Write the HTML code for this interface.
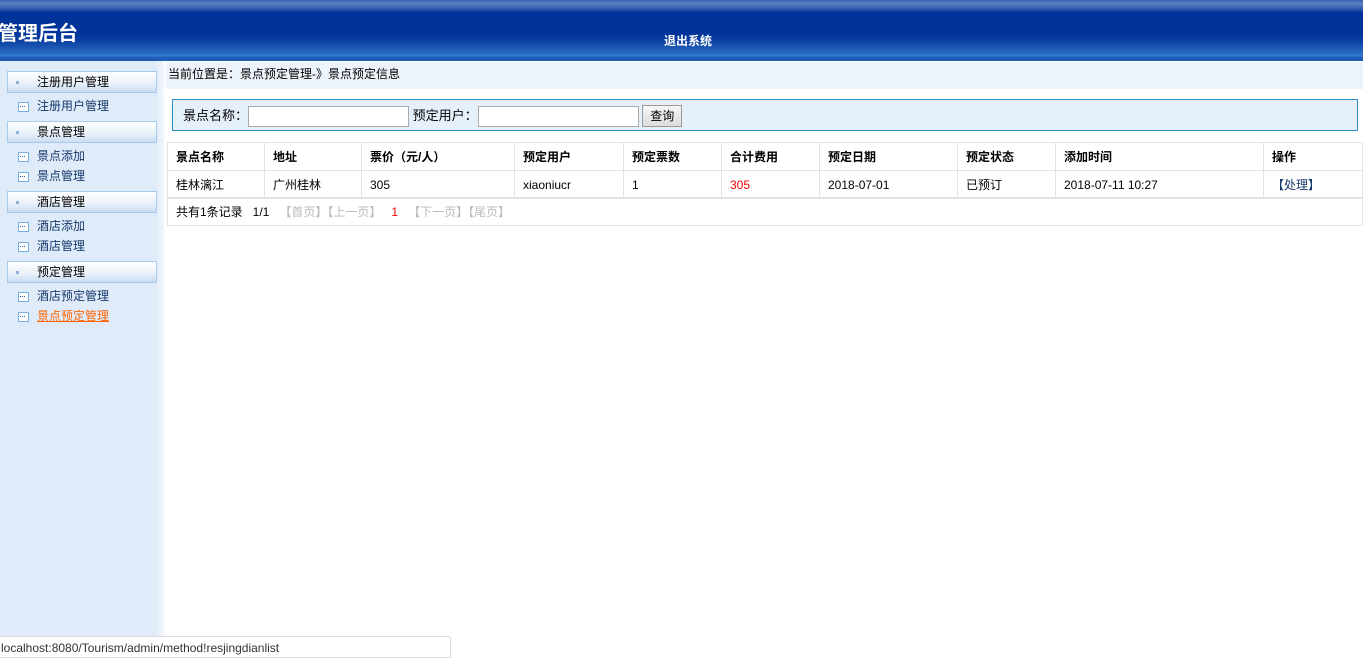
<!DOCTYPE html>
<html><head><meta charset="utf-8"><style>
*{margin:0;padding:0;box-sizing:border-box}
body{width:1363px;height:658px;overflow:hidden;background:#fff;font-family:"Liberation Sans","Noto Sans CJK SC",sans-serif;font-size:12px;color:#000;position:relative}
#hd{position:absolute;left:0;top:0;width:1363px;height:61px;background:linear-gradient(#3a5fb0 0,#5b80c4 3px,#4a70bb 6px,#1d48a3 11px,#00339a 12px,#00339a 32px,#0a3da0 40px,#2a6cc4 54px,#3b82d4 56px,#1f5cb7 57px,#1f5cb7 61px)}
#hd .t{position:absolute;left:-2px;top:17px;color:#fff;font-size:20px;font-weight:bold}
#hd .q{position:absolute;left:664px;top:32px;color:#fff;font-size:12px;font-weight:bold}
#sb{position:absolute;left:0;top:61px;width:166px;height:597px;background:linear-gradient(90deg,#dfebf9 0,#dfebf9 155px,#eef4fc 162px,#fff 166px)}
.h{position:absolute;left:7px;width:150px;height:22px;border:1px solid #a9c9ea;background:linear-gradient(#fff,#e8f0fa 60%,#c9dcf2);font-size:12px;line-height:20px;padding-left:29px;color:#000}
.h:before{content:"";position:absolute;left:8px;top:9px;width:3px;height:3px;background:#8fb3e0}
.i{position:absolute;left:37px;font-size:12px;color:#16386a;line-height:16px}
.i:before{content:"";position:absolute;left:-19px;top:4px;width:9px;height:8px;border:1px solid #7aaee0;background:#fff}
.i:after{content:"";position:absolute;left:-17px;top:8px;width:5px;height:1px;border-top:1px dotted #2d6bc0}
.i.a{color:#f60;text-decoration:underline}
#bc{position:absolute;left:166px;top:62px;width:1197px;height:27px;background:#edf3fa;line-height:25px;padding-left:2px}
#sr{position:absolute;left:172px;top:99px;width:1186px;height:32px;border:1px solid #2a8fc6;background:#e6f0fb;padding:5px 0 0 10px;font-size:13px}
#sr input{width:161px;height:21px;border:1px solid #aaa;background:#fff;vertical-align:middle}
#sr button{height:22px;width:40px;border:1px solid #999;background:linear-gradient(#f6f6f6,#ddd);font-size:12px;vertical-align:middle;font-family:inherit;position:relative;top:-1px}
table{position:absolute;left:167px;top:142px;width:1196px;border-collapse:collapse;font-size:12px}
td{border:1px solid #e2e2e2;height:28px;padding-left:8px}
tr.hr td{font-weight:bold}
.ft{position:absolute;left:167px;top:197px;width:1196px;height:29px;border:1px solid #e2e2e2;line-height:28px;padding-left:8px}
.g{color:#bbb}
#st{position:absolute;left:0;top:636px;width:451px;height:22px;border:1px solid #ddd;border-left:0;border-radius:0 3px 0 0;background:#fff;font-size:12px;line-height:22px;color:#333;padding-left:1px}
</style></head><body>
<div id="hd"><div class="t">管理后台</div><div class="q">退出系统</div></div>
<div id="sb">
<div class="h" style="top:10px">注册用户管理</div>
<div class="i" style="top:37px">注册用户管理</div>
<div class="h" style="top:60px">景点管理</div>
<div class="i" style="top:87px">景点添加</div>
<div class="i" style="top:107px">景点管理</div>
<div class="h" style="top:130px">酒店管理</div>
<div class="i" style="top:157px">酒店添加</div>
<div class="i" style="top:177px">酒店管理</div>
<div class="h" style="top:200px">预定管理</div>
<div class="i" style="top:227px">酒店预定管理</div>
<div class="i a" style="top:247px">景点预定管理</div>
</div>
<div id="bc">当前位置是：景点预定管理-》景点预定信息</div>
<div id="sr">景点名称：<input> 预定用户：<input> <button>查询</button></div>
<table>
<tr class="hr"><td style="width:97px">景点名称</td><td style="width:97px">地址</td><td style="width:153px">票价（元/人）</td><td style="width:109px">预定用户</td><td style="width:98px">预定票数</td><td style="width:98px">合计费用</td><td style="width:138px">预定日期</td><td style="width:98px">预定状态</td><td style="width:208px">添加时间</td><td>操作</td></tr>
<tr><td>桂林漓江</td><td>广州桂林</td><td>305</td><td>xiaoniucr</td><td>1</td><td style="color:#e00">305</td><td>2018-07-01</td><td>已预订</td><td>2018-07-11 10:27</td><td style="color:#16386a">【处理】</td></tr>
</table>
<div class="ft">共有1条记录&nbsp;&nbsp; 1/1 &nbsp;&nbsp;<span class="g">【首页】【上一页】</span>&nbsp;&nbsp; <span style="color:#e00">1</span> &nbsp;&nbsp;<span class="g">【下一页】【尾页】</span></div>
<div id="st">localhost:8080/Tourism/admin/method!resjingdianlist</div>
</body></html>
